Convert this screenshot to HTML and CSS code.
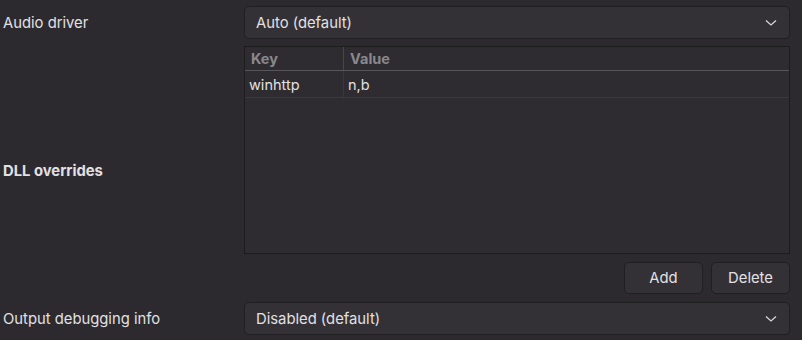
FILE: index.html
```html
<!DOCTYPE html>
<html>
<head>
<meta charset="utf-8">
<link rel="stylesheet" href="styles.css">
</head>
<body>
<div class="form">
  <div class="label">Audio driver</div>
  <div class="field">
    <div class="combo"><span>Auto (default)</span>
      <svg class="chev" width="12" height="8" viewBox="0 0 12 8"><path d="M1 1.5 L6 6 L11 1.5" fill="none" stroke="#d8d6da" stroke-width="1.3"/></svg>
    </div>
  </div>

  <div class="label bold">DLL overrides</div>
  <div class="field stack">
    <div class="table">
      <div class="thead">
        <div class="c1">Key</div>
        <div class="c2">Value</div>
      </div>
      <div class="trow">
        <div class="c1">winhttp</div>
        <div class="c2">n,b</div>
      </div>
    </div>
    <div class="buttons">
      <button class="btn">Add</button>
      <button class="btn">Delete</button>
    </div>
  </div>

  <div class="label">Output debugging info</div>
  <div class="field">
    <div class="combo"><span>Disabled (default)</span>
      <svg class="chev" width="12" height="8" viewBox="0 0 12 8"><path d="M1 1.5 L6 6 L11 1.5" fill="none" stroke="#d8d6da" stroke-width="1.3"/></svg>
    </div>
  </div>
</div>
</body>
</html>
```
FILE: styles.css
```css
html, body {
  margin: 0;
  padding: 0;
  background: #2c2a2e;
  width: 802px;
  height: 340px;
  overflow: hidden;
}
body {
  font-family: Inter, "Noto Sans", sans-serif;
  font-size: 14.5px;
  color: #e2e0e4;
}
.form {
  display: grid;
  grid-template-columns: 244px 546px;
  row-gap: 7px;
  padding-top: 6px;
}
.label {
  padding-left: 3px;
  display: flex;
  align-items: center;
  font-size: 14.8px;
}
.label.bold { font-weight: 700; }
.stack {
  display: flex;
  flex-direction: column;
  gap: 8px;
}
.combo {
  height: 33px;
  box-sizing: border-box;
  background: #333136;
  border: 1px solid #1f1e21;
  border-radius: 5px;
  display: flex;
  align-items: center;
  justify-content: space-between;
  padding: 0 12px 0 11px;
  font-size: 14.8px;
}
.chev { margin-top: 1px; }
.table {
  height: 208px;
  box-sizing: border-box;
  background: #2e2c30;
  border: 1px solid #1c1b1e;
}
.thead, .trow {
  display: flex;
}
.thead {
  height: 23px;
  border-bottom: 1px solid #58565b;
  color: #8a888d;
  font-weight: 700;
}
.trow {
  height: 26px;
  border-bottom: 1px solid #3a383c;
}
.c1 {
  width: 99px;
  flex: none;
  display: flex;
  align-items: center;
  padding-left: 6px;
  box-sizing: border-box;
}
.thead .c1 { border-right: 1px solid #48464b; }
.trow .c1 { border-right: 1px solid #3a383c; padding-left: 4px; }
.c2 {
  flex: 1;
  display: flex;
  align-items: center;
  padding-left: 6px;
}
.trow .c2 { padding-left: 4px; }
.buttons {
  display: flex;
  justify-content: flex-end;
  gap: 8px;
  margin-bottom: 1px;
}
.btn {
  width: 79px;
  height: 32px;
  background: #333136;
  border: 1px solid #1f1e21;
  border-radius: 5px;
  color: #e2e0e4;
  font-family: inherit;
  font-size: 14.8px;
  padding: 0;
}
```
